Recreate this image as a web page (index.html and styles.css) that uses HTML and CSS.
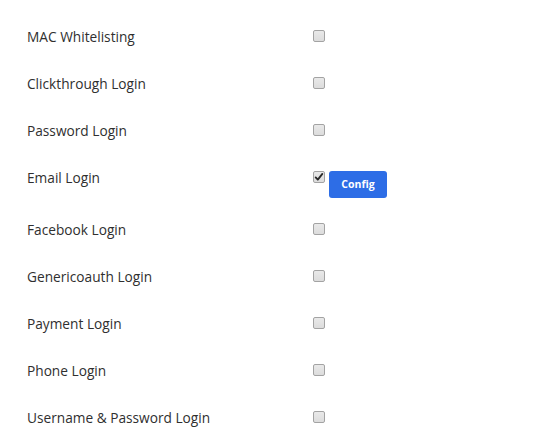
FILE: index.html
```html
<!DOCTYPE html>
<html>
<head>
<meta charset="utf-8">
<link rel="stylesheet" href="styles.css">
</head>
<body>
<div class="list">
  <div class="row"><div class="label">MAC Whitelisting</div><div class="ctrl"><span class="cb"></span></div></div>
  <div class="row"><div class="label">Clickthrough Login</div><div class="ctrl"><span class="cb"></span></div></div>
  <div class="row"><div class="label">Password Login</div><div class="ctrl"><span class="cb"></span></div></div>
  <div class="row"><div class="label">Email Login</div><div class="ctrl"><span class="cb checked"><svg viewBox="0 0 12 12" width="10" height="10"><path d="M2 6.5 L4.6 9.2 L10 2.3" fill="none" stroke="#2a2a2a" stroke-width="2.2" stroke-linecap="round" stroke-linejoin="round"/></svg></span><button class="btn">Config</button></div></div>
  <div class="row"><div class="label">Facebook Login</div><div class="ctrl"><span class="cb"></span></div></div>
  <div class="row"><div class="label">Genericoauth Login</div><div class="ctrl"><span class="cb"></span></div></div>
  <div class="row"><div class="label">Payment Login</div><div class="ctrl"><span class="cb"></span></div></div>
  <div class="row"><div class="label">Phone Login</div><div class="ctrl"><span class="cb"></span></div></div>
  <div class="row"><div class="label">Username &amp; Password Login</div><div class="ctrl"><span class="cb"></span></div></div>
</div>
</body>
</html>
```
FILE: styles.css
```css
html, body {
  margin: 0;
  padding: 0;
  background: #fff;
}
body {
  font-family: "Open Sans", "Noto Sans", sans-serif;
  color: #2f2f2f;
  font-size: 13.7px;
}
.list {
  padding: 26px 0 0 27px;
}
.row {
  display: flex;
  align-items: flex-start;
  padding: 0 0 21.5px 0;
  min-height: 25.4px;
}
.label {
  width: 286px;
  line-height: 22px;
  height: 22px;
  white-space: nowrap;
}
.ctrl {
  display: flex;
  align-items: flex-start;
  gap: 4px;
  padding-top: 4px;
}
.cb {
  box-sizing: border-box;
  width: 12px;
  height: 12px;
  border: 1px solid #a3a3a3;
  border-radius: 2px;
  background: linear-gradient(#e9e9e9, #dcdcdc);
  display: flex;
  align-items: center;
  justify-content: center;
}
.cb svg {
  display: block;
}
.btn {
  width: 58px;
  height: 27px;
  border: none;
  border-radius: 3px;
  background: #2d6de6;
  color: #fff;
  font-family: "Open Sans", "Noto Sans", sans-serif;
  font-weight: 700;
  font-size: 10.5px;
  padding: 0;
  margin-top: 0;
}
```
